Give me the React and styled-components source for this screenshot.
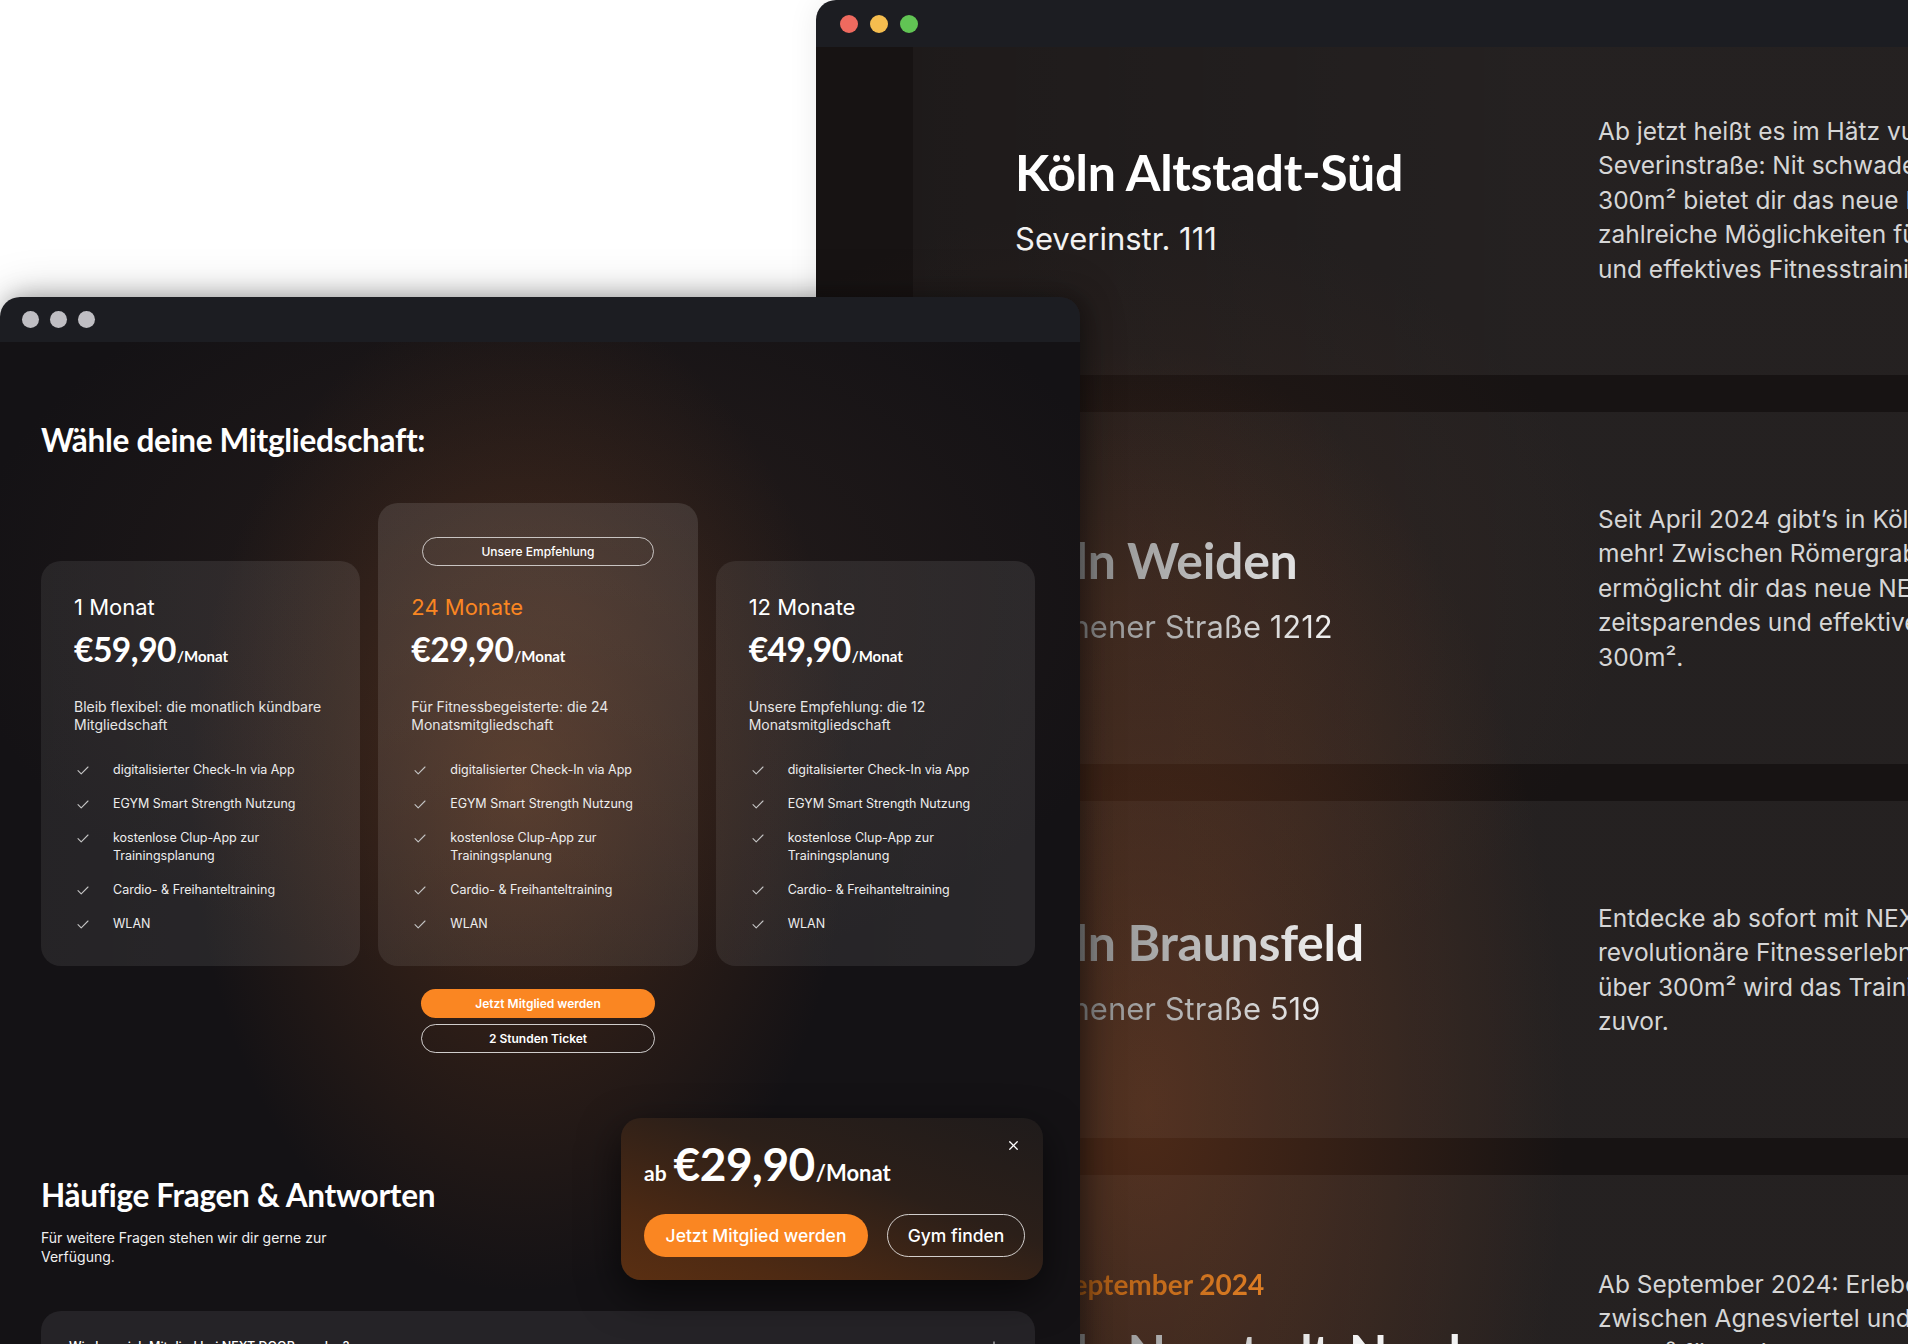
import styled, { createGlobalStyle } from "styled-components";
import { X, Plus } from "lucide-react";

const GlobalStyle = createGlobalStyle`
  html, body {
    margin: 0;
    padding: 0;
    background: #fff;
  }
  body {
    font-family: Inter, "Noto Sans", sans-serif;
    overflow: hidden;
    -webkit-font-smoothing: antialiased;
  }
  * { box-sizing: border-box; }
`;

const ORANGE = "#fa8622";

const Desktop = styled.div`
  position: relative;
  width: 1908px;
  height: 1344px;
  overflow: hidden;
  background: #fff;
`;

const Window = styled.div`
  position: absolute;
  display: flex;
  flex-direction: column;
  border-radius: 20px 20px 0 0;
  overflow: hidden;
`;

const BackWindow = styled(Window)`
  left: 816px;
  top: 0;
  width: 1200px;
  height: 1400px;
  box-shadow: 0 0 30px rgba(0, 0, 0, 0.08);
`;

const FrontWindow = styled(Window)`
  left: 0;
  top: 297px;
  width: 1080px;
  height: 1100px;
  box-shadow: 0 0 50px rgba(0, 0, 0, 0.18), 6px 0 24px rgba(0, 0, 0, 0.35);
`;

const TitleBar = styled.div`
  flex: none;
  display: flex;
  align-items: center;
  gap: ${p => p.$gap}px;
  height: ${p => p.$h}px;
  padding-left: ${p => p.$pad}px;
  background: #1c1d22;
`;

const Dot = styled.span`
  width: ${p => p.$size}px;
  height: ${p => p.$size}px;
  border-radius: 50%;
  background: ${p => p.$color};
`;

/* ---------- back window: locations ---------- */

const BackBody = styled.div`
  flex: 1;
  padding-left: 97px;
  overflow: hidden;
  background:
    radial-gradient(ellipse 420px 760px at 330px 1060px, rgba(120, 60, 28, 0.55), rgba(120, 60, 28, 0) 100%),
    radial-gradient(ellipse 500px 400px at 300px 560px, rgba(90, 50, 30, 0.25), rgba(90, 50, 30, 0) 100%),
    #171313;
`;

const LocationList = styled.div`
  display: flex;
  flex-direction: column;
  gap: 37px;
  margin-top: -22px;
`;

const LocationCard = styled.section`
  height: ${p => p.$h}px;
  display: grid;
  grid-template-columns: 583px 1fr;
  align-items: ${p => (p.$pt ? "start" : "center")};
  padding: ${p => p.$pt || 0}px 0 0 102px;
  border-radius: 14px 0 0 14px;
  background: linear-gradient(90deg, rgba(255, 255, 255, 0.03) 0%, rgba(255, 255, 255, 0.06) 55%, rgba(255, 255, 255, 0.06) 100%);
`;

const LocationHead = styled.div`
  display: flex;
  flex-direction: column;
`;

const fade = `
  background: linear-gradient(90deg, #4a4a4a 0%, #9a9a9a 18%, #f2f2f2 55%);
  -webkit-background-clip: text;
  background-clip: text;
  color: transparent;
`;

const Opening = styled.div`
  font-family: Lato, Inter, sans-serif;
  font-weight: 700;
  font-size: 28px;
  line-height: 34px;
  margin-bottom: 21px;
  background: linear-gradient(90deg, #5a3210 0%, #b86418 18%, #f08a2a 55%);
  -webkit-background-clip: text;
  background-clip: text;
  color: transparent;
`;

const LocationName = styled.h2`
  margin: 0;
  font-family: Lato, Inter, sans-serif;
  font-weight: 700;
  font-size: 50px;
  line-height: 60px;
  letter-spacing: -0.3px;
  color: #fff;
  ${p => p.$fade && fade}
`;

const Street = styled.div`
  margin-top: 18px;
  font-size: 31px;
  line-height: 38px;
  color: #f2f2f2;
  ${p => p.$fade && fade}
`;

const LocationText = styled.p`
  margin: 0;
  font-size: 24.5px;
  line-height: 34.4px;
  color: #d6d6d6;
  white-space: nowrap;
`;

/* ---------- front window: memberships ---------- */

const FrontBody = styled.div`
  position: relative;
  flex: 1;
  padding: 80px 45px 0 41px;
  color: #fff;
  background:
    radial-gradient(ellipse 330px 500px at 520px 450px, rgba(125, 66, 30, 0.45), rgba(125, 66, 30, 0) 100%),
    radial-gradient(ellipse 600px 380px at 560px 260px, rgba(70, 48, 38, 0.35), rgba(70, 48, 38, 0) 100%),
    #141215;
`;

const SectionTitle = styled.h2`
  margin: 0;
  font-family: Lato, Inter, sans-serif;
  font-weight: 700;
  font-size: ${p => p.$size}px;
  line-height: 36px;
  letter-spacing: -0.3px;
`;

const PlanGrid = styled.div`
  display: grid;
  grid-template-columns: repeat(3, 1fr);
  gap: 18px;
  align-items: end;
  margin-top: 45px;
`;

const PlanCard = styled.div`
  border-radius: 20px;
  padding: ${p => (p.$featured ? "34px 33px 33px" : "32px 33px 33px")};
  background: ${p =>
    p.$featured
      ? "linear-gradient(180deg, rgba(255,255,255,0.11) 0%, rgba(255,255,255,0.08) 100%)"
      : "linear-gradient(90deg, rgba(255,255,255,0.075) 0%, rgba(255,255,255,0.09) 100%)"};
`;

const Badge = styled.div`
  width: 232px;
  height: 29px;
  margin: 0 auto 27px;
  display: flex;
  align-items: center;
  justify-content: center;
  border: 1px solid rgba(255, 255, 255, 0.7);
  border-radius: 999px;
  font-size: 12px;
  font-weight: 500;
`;

const PlanName = styled.div`
  font-size: 22px;
  line-height: 28px;
  color: ${p => (p.$accent ? ORANGE : "#fff")};
`;

const PriceRow = styled.div`
  display: flex;
  align-items: baseline;
  font-family: Lato, Inter, sans-serif;
  font-weight: 700;
  line-height: ${p => p.$lh}px;
`;

const Amount = styled.span`
  font-size: ${p => p.$size}px;
  letter-spacing: -0.5px;
`;

const Per = styled.span`
  font-size: ${p => p.$size}px;
  margin-left: 1px;
`;

const PlanPrice = styled(PriceRow)`
  margin-top: 9px;
`;

const PlanDesc = styled.p`
  margin: 23px 0 0;
  font-size: 14px;
  line-height: 18px;
  color: #e6e6e6;
`;

const FeatureList = styled.ul`
  list-style: none;
  margin: 27px 0 0;
  padding: 0;
  display: flex;
  flex-direction: column;
  gap: 16px;
`;

const Feature = styled.li`
  display: grid;
  grid-template-columns: 39px 1fr;
  font-size: 12.5px;
  line-height: 18px;
  color: #eeeeee;
  svg { margin: 5px 0 0 3px; }
`;

const ButtonStack = styled.div`
  display: flex;
  flex-direction: column;
  align-items: center;
  gap: 6px;
  margin-top: 23px;
`;

const Pill = styled.button`
  display: flex;
  align-items: center;
  justify-content: center;
  width: ${p => p.$w}px;
  height: ${p => p.$h}px;
  border-radius: 999px;
  font-family: Inter, sans-serif;
  font-size: ${p => p.$fs}px;
  font-weight: ${p => (p.$fs > 14 ? 500 : 600)};
  color: #fff;
  cursor: pointer;
  background: ${p => (p.$outline ? "transparent" : ORANGE)};
  border: ${p => (p.$outline ? "1.5px solid rgba(255,255,255,0.78)" : "none")};
`;

const Faq = styled.section`
  margin-top: 124px;
`;

const FaqIntro = styled.p`
  margin: 15px 0 0;
  font-size: 14px;
  line-height: 19px;
  color: #f0f0f0;
`;

const FaqItem = styled.div`
  margin-top: 45px;
  display: flex;
  justify-content: space-between;
  align-items: flex-start;
  padding: 28px 34px 24px 28px;
  border-radius: 20px;
  background: #252327;
  font-size: 12.5px;
  font-weight: 500;
`;

const StickyOffer = styled.div`
  position: absolute;
  left: 621px;
  top: 776px;
  width: 422px;
  height: 162px;
  padding: 21px 18px 23px 23px;
  border-radius: 20px;
  background: linear-gradient(200deg, #1f1b1b 0%, #2b1f19 40%, #4e2a13 80%, #5a2f12 100%);
  box-shadow: 0 14px 40px rgba(0, 0, 0, 0.6);
`;

const Small = styled.span`
  font-size: 21px;
  margin-right: 7px;
`;

const OfferActions = styled.div`
  display: flex;
  gap: 19px;
  margin-top: 16px;
`;

const CloseButton = styled.button`
  position: absolute;
  top: 20px;
  right: 22px;
  padding: 0;
  display: flex;
  background: none;
  border: 0;
  color: #fff;
  cursor: pointer;
`;

const Check = () => (
  <svg width="12" height="9" viewBox="0 0 12 9">
    <path d="M1 4.6 L4.2 7.8 L11 1" fill="none" stroke="#c4c4c4" strokeWidth="1.1" strokeLinecap="round" strokeLinejoin="round" />
  </svg>
);

const locations = [
  {
    h: 350,
    name: "Köln Altstadt-Süd",
    street: "Severinstr. 111",
    text: [
      "Ab jetzt heißt es im Hätz vum Veedel an der",
      "Severinstraße: Nit schwadeln, trainieren! Auf über",
      "300m² bietet dir das neue NEXT DOOR Gym",
      "zahlreiche Möglichkeiten für ein zeitsparendes",
      "und effektives Fitnesstraining.",
    ],
  },
  {
    h: 352,
    fade: true,
    name: "Köln Weiden",
    street: "Aachener Straße 1212",
    text: [
      "Seit April 2024 gibt’s in Köln-Weiden keine Ausreden",
      "mehr! Zwischen Römergrab und Rhein-Energie",
      "ermöglicht dir das neue NEXT DOOR Gym ein",
      "zeitsparendes und effektives Training auf über",
      "300m².",
    ],
  },
  {
    h: 337,
    fade: true,
    name: "Köln Braunsfeld",
    street: "Aachener Straße 519",
    text: [
      "Entdecke ab sofort mit NEXT DOOR Braunsfeld das",
      "revolutionäre Fitnesserlebnis in deiner Nähe. Auf",
      "über 300m² wird das Training so einfach wie nie",
      "zuvor.",
    ],
  },
  {
    h: 337,
    pt: 92,
    fade: true,
    opening: "Ab September 2024",
    name: "Köln Neustadt-Nord",
    street: "Neusser Straße 230",
    text: [
      "Ab September 2024: Erlebe NEXT DOOR Neustadt-Nord",
      "zwischen Agnesviertel und Ebertplatz. Auf über",
      "300m² führt dich NEXT DOOR zu deinem Ziel.",
      "Wir freuen uns auf dich.",
    ],
  },
];

const features = [
  "digitalisierter Check-In via App",
  "EGYM Smart Strength Nutzung",
  "kostenlose Clup-App zur Trainingsplanung",
  "Cardio- & Freihanteltraining",
  "WLAN",
];

const plans = [
  { name: "1 Monat", price: "€59,90", desc: "Bleib flexibel: die monatlich kündbare Mitgliedschaft" },
  { name: "24 Monate", price: "€29,90", desc: "Für Fitnessbegeisterte: die 24 Monatsmitgliedschaft", featured: true },
  { name: "12 Monate", price: "€49,90", desc: "Unsere Empfehlung: die 12 Monatsmitgliedschaft" },
];

export default function App() {
  return (
    <>
      <GlobalStyle />
      <Desktop>
        <BackWindow>
          <TitleBar $h={47} $gap={12} $pad={24}>
            <Dot $size={18} $color="#ee6a5f" />
            <Dot $size={18} $color="#f5bd4f" />
            <Dot $size={18} $color="#61c454" />
          </TitleBar>
          <BackBody>
            <LocationList>
              {locations.map(loc => (
                <LocationCard key={loc.name} $h={loc.h} $pt={loc.pt}>
                  <LocationHead>
                    {loc.opening && <Opening>{loc.opening}</Opening>}
                    <LocationName $fade={loc.fade}>{loc.name}</LocationName>
                    <Street $fade={loc.fade}>{loc.street}</Street>
                  </LocationHead>
                  <LocationText>
                    {loc.text.map((line, i) => (
                      <span key={i}>
                        {line}
                        <br />
                      </span>
                    ))}
                  </LocationText>
                </LocationCard>
              ))}
            </LocationList>
          </BackBody>
        </BackWindow>

        <FrontWindow>
          <TitleBar $h={45} $gap={11} $pad={22}>
            <Dot $size={17} $color="#bfbec3" />
            <Dot $size={17} $color="#bfbec3" />
            <Dot $size={17} $color="#bfbec3" />
          </TitleBar>
          <FrontBody>
            <SectionTitle $size={31.5}>Wähle deine Mitgliedschaft:</SectionTitle>

            <PlanGrid>
              {plans.map(plan => (
                <PlanCard key={plan.name} $featured={plan.featured}>
                  {plan.featured && <Badge>Unsere Empfehlung</Badge>}
                  <PlanName $accent={plan.featured}>{plan.name}</PlanName>
                  <PlanPrice $lh={38}>
                    <Amount $size={33.5}>{plan.price}</Amount>
                    <Per $size={15}>/Monat</Per>
                  </PlanPrice>
                  <PlanDesc>{plan.desc}</PlanDesc>
                  <FeatureList>
                    {features.map(f => (
                      <Feature key={f}>
                        <Check />
                        <span>{f}</span>
                      </Feature>
                    ))}
                  </FeatureList>
                </PlanCard>
              ))}
            </PlanGrid>

            <ButtonStack>
              <Pill $w={234} $h={29} $fs={12}>Jetzt Mitglied werden</Pill>
              <Pill $w={234} $h={29} $fs={12} $outline>2 Stunden Ticket</Pill>
            </ButtonStack>

            <Faq>
              <SectionTitle $size={31.5}>Häufige Fragen &amp; Antworten</SectionTitle>
              <FaqIntro>
                Für weitere Fragen stehen wir dir gerne zur
                <br />
                Verfügung.
              </FaqIntro>
              <FaqItem>
                <span>Wie kann ich Mitglied bei NEXT DOOR werden?</span>
                <Plus size={14} strokeWidth={1.5} />
              </FaqItem>
            </Faq>

            <StickyOffer>
              <CloseButton aria-label="Schließen">
                <X size={15} strokeWidth={2} />
              </CloseButton>
              <PriceRow $lh={50}>
                <Small>ab</Small>
                <Amount $size={46}>€29,90</Amount>
                <Per $size={22}>/Monat</Per>
              </PriceRow>
              <OfferActions>
                <Pill $w={224} $h={43} $fs={17.5}>Jetzt Mitglied werden</Pill>
                <Pill $w={138} $h={43} $fs={17.5} $outline>Gym finden</Pill>
              </OfferActions>
            </StickyOffer>
          </FrontBody>
        </FrontWindow>
      </Desktop>
    </>
  );
}
